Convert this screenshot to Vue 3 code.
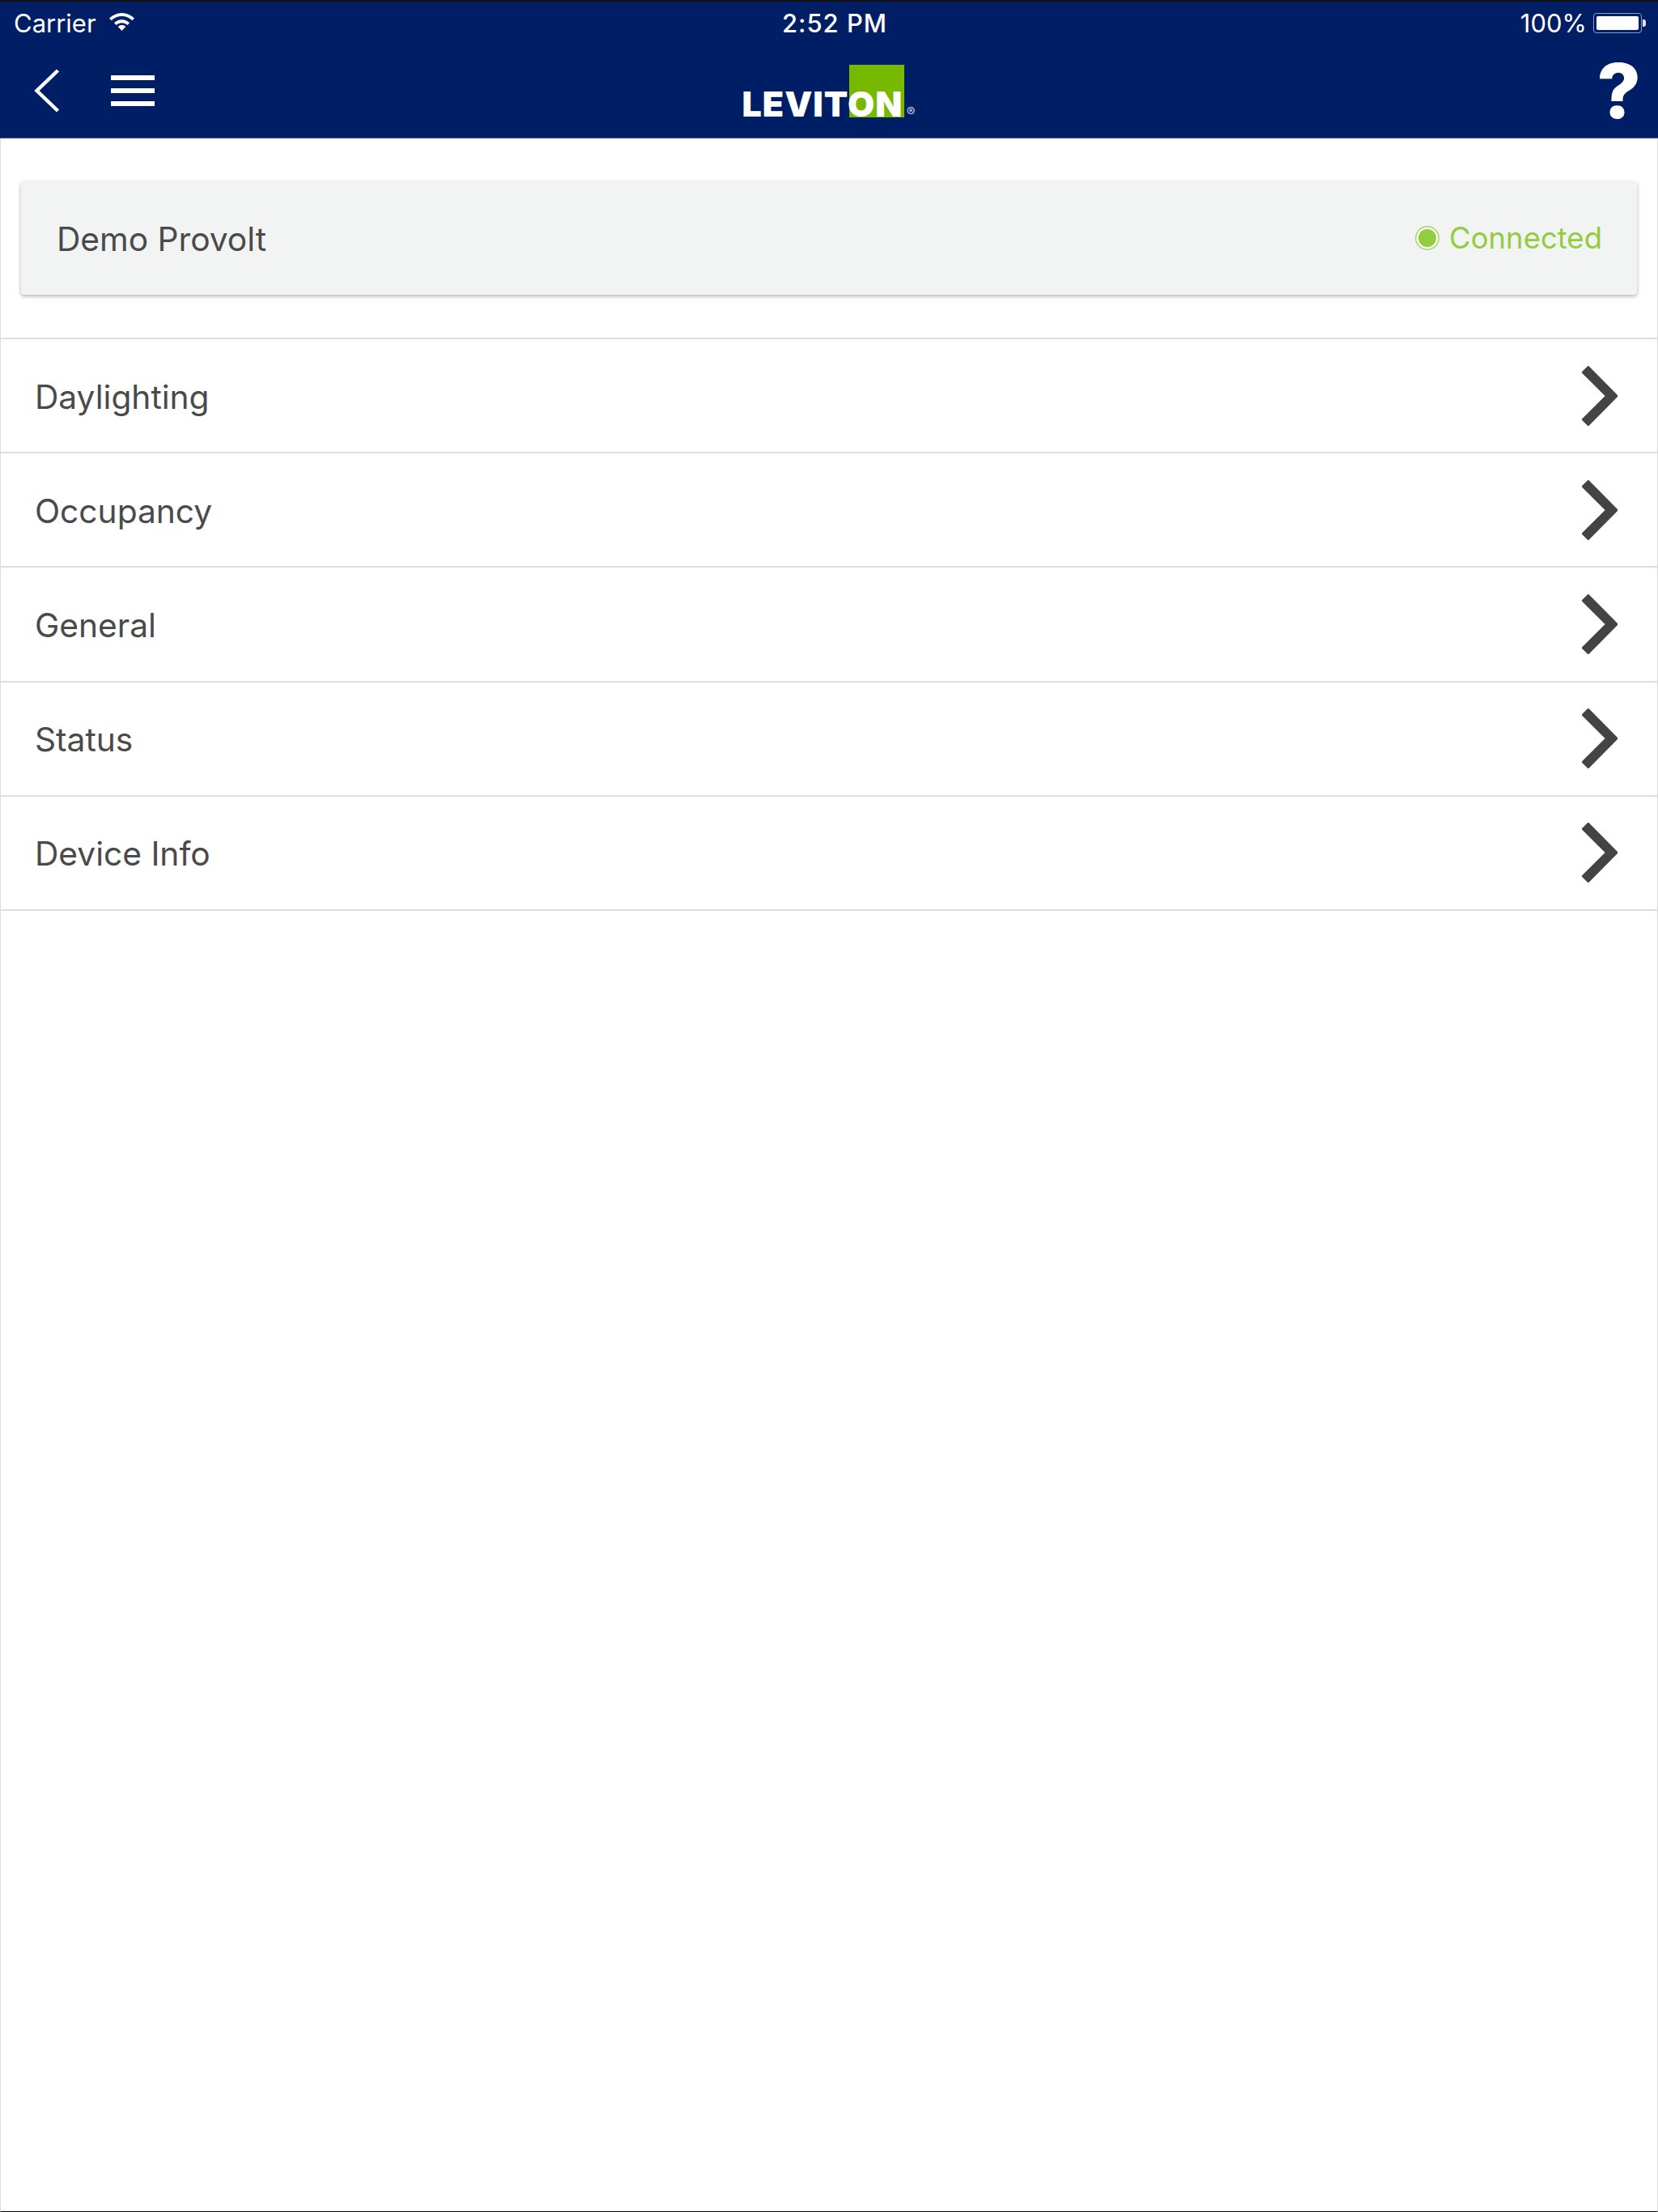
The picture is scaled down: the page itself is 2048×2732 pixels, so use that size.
<script setup>
const rows = ['Daylighting', 'Occupancy', 'General', 'Status', 'Device Info'];
</script>

<template>
  <div class="page">
    <header class="top">
      <div class="status">
        <div class="status__left">
          <span>Carrier</span>
          <svg class="wifi" width="33" height="23" viewBox="0 0 33 23">
            <path d="M1 7.5C10 -1.2 23 -1.2 32 7.5L29.4 10.2C21.8 3.2 11.2 3.2 3.6 10.2Z" fill="#fff" />
            <path d="M7 13.2C12.5 8 20.5 8 26 13.2L23.4 15.9C19.2 12.2 13.8 12.2 9.6 15.9Z" fill="#fff" />
            <path d="M11.8 18C14.6 15.4 18.4 15.4 21.2 18L16.5 23Z" fill="#fff" />
          </svg>
        </div>
        <span class="status__time">2:52 PM</span>
        <div class="status__right">
          <span>100%</span>
          <div class="battery"><div class="battery__fill"></div></div>
          <div class="battery__nub"></div>
        </div>
      </div>
      <nav class="nav">
        <div class="nav__left">
          <svg width="32" height="54" viewBox="0 0 32 54">
            <path d="M29.5 2L3.5 27L29.5 52" fill="none" stroke="#fff" stroke-width="4.5" />
          </svg>
          <div class="burger"><i></i><i></i><i></i></div>
        </div>
        <div class="logo">
          <div class="logo__square"></div>
          <span class="logo__text">LEVITON</span>
          <span class="logo__reg">®</span>
        </div>
        <span class="help">?</span>
      </nav>
    </header>

    <main class="body">
      <div class="card-wrap">
        <div class="card">
          <span class="label">Demo Provolt</span>
          <div class="conn">
            <span class="conn__dot"></span>
            <span>Connected</span>
          </div>
        </div>
      </div>
      <ul class="list">
        <li v-for="row in rows" :key="row" class="list__row">
          <span class="label">{{ row }}</span>
          <svg width="44" height="74" viewBox="0 0 44 74">
            <path d="M1.5 7.86L7.86 1.5L43 37L7.86 72.5L1.5 66.14L30.64 37Z" fill="#444" stroke="#444" stroke-width="3" stroke-linejoin="round" />
          </svg>
        </li>
      </ul>
    </main>
  </div>
</template>

<style>
html, body {
  margin: 0;
  background: #fff;
}
</style>

<style scoped>
.page {
  display: flex;
  flex-direction: column;
  width: 2048px;
  height: 2732px;
  font-family: Inter, "Liberation Sans", sans-serif;
  overflow: hidden;
}

.top {
  flex: none;
  height: 171px;
  box-sizing: border-box;
  border-top: 2px solid #111;
  border-bottom: 1px solid #4a5a80;
  background: #001e66;
  color: #fff;
}

.status {
  display: grid;
  grid-template-columns: 1fr auto 1fr;
  align-items: center;
  height: 52px;
  padding: 0 15px 0 17px;
  font-size: 31px;
}

.status__left {
  display: flex;
  align-items: center;
  gap: 15px;
}

.wifi {
  margin-top: -4px;
}

.status__time {
  margin-left: 12px;
  font-weight: 500;
  letter-spacing: 1px;
}

.status__right {
  display: flex;
  align-items: center;
  justify-content: flex-end;
}

.battery {
  box-sizing: border-box;
  width: 60px;
  height: 25px;
  margin-left: 8px;
  padding: 3px;
  border: 1.5px solid #8a9bc4;
  border-radius: 4px;
}

.battery__fill {
  height: 100%;
  border-radius: 2px;
  background: #fff;
}

.battery__nub {
  width: 4px;
  height: 9px;
  margin-left: 1px;
  border-radius: 0 3px 3px 0;
  background: #dfe4f0;
}

.nav {
  display: grid;
  grid-template-columns: 1fr auto 1fr;
  align-items: center;
  height: 116px;
  padding: 0 21px 0 42px;
}

.nav__left {
  display: flex;
  align-items: center;
  gap: 63px;
}

.burger {
  display: flex;
  flex-direction: column;
  gap: 10px;
  width: 54px;
}

.burger i {
  display: block;
  height: 6px;
  background: #fff;
}

.logo {
  position: relative;
  width: 214px;
  height: 65px;
  margin: 0 11px 0 -11px;
}

.logo__square {
  position: absolute;
  top: 0;
  right: 14px;
  width: 68px;
  height: 65px;
  background: #76b900;
}

.logo__text {
  position: absolute;
  bottom: -5px;
  left: 0;
  font-size: 43px;
  font-weight: 900;
  line-height: 44px;
  letter-spacing: 1px;
}

.logo__reg {
  position: absolute;
  right: 0;
  bottom: 0;
  font-size: 16px;
  line-height: 14px;
  color: #c8d0e0;
}

.help {
  justify-self: end;
  font-size: 94px;
  font-weight: 800;
  line-height: 1;
}

.body {
  flex: 1;
  border-left: 1px solid #dcdcdc;
  border-right: 1px solid #dcdcdc;
  border-bottom: 1px solid #000;
}

.card-wrap {
  padding: 53px 25px;
}

.card {
  display: flex;
  align-items: center;
  justify-content: space-between;
  box-sizing: border-box;
  height: 140px;
  padding: 0 43px 0 44px;
  border-radius: 4px;
  background: #f2f4f4;
  box-shadow: 0 2px 5px rgba(0, 0, 0, 0.3);
  color: #4a4a4a;
  font-size: 40.7px;
}

.label {
  margin-top: 3px;
}

.conn {
  display: flex;
  align-items: center;
  gap: 16px;
  color: #93cc3e;
  font-size: 36.5px;
}

.conn__dot {
  width: 22px;
  height: 22px;
  border-radius: 50%;
  background: #93cc3e;
  box-shadow: 0 0 0 2.5px #f8faf5, 0 0 0 4px #a8d568;
}

.list {
  margin: 0;
  padding: 0;
  border-top: 2px solid #dedede;
  list-style: none;
}

.list__row {
  display: flex;
  align-items: center;
  justify-content: space-between;
  box-sizing: border-box;
  height: 141.2px;
  padding: 0 49px 0 42px;
  border-bottom: 2px solid #dedede;
  color: #4a4a4a;
  font-size: 40.7px;
}
</style>
